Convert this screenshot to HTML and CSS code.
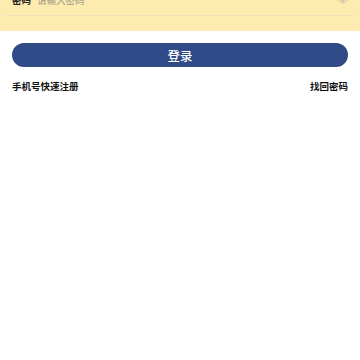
FILE: index.html
```html
<!DOCTYPE html>
<html lang="zh">
<head>
<meta charset="utf-8">
<link rel="stylesheet" href="styles.css">
</head>
<body>
<div class="panel">
  <div class="row">
    <span class="label">密码</span>
    <span class="placeholder">请输入密码</span>
    <svg class="eye" width="10" height="8" viewBox="0 0 10 8"><path d="M0.5 4 Q5 -1.5 9.5 4 Q5 9.5 0.5 4 Z" fill="none" stroke="#c9c2a8" stroke-width="1"/><circle cx="5" cy="4" r="1.6" fill="#c9c2a8"/></svg>
  </div>
</div>
<div class="actions">
  <button class="login">登录</button>
  <div class="links">
    <span class="link">手机号快速注册</span>
    <span class="link">找回密码</span>
  </div>
</div>
</body>
</html>
```
FILE: styles.css
```css
html, body {
  margin: 0;
  padding: 0;
  background: #ffffff;
  font-family: "Noto Sans CJK SC", "Noto Sans", sans-serif;
}
.panel {
  background: #feebb0;
  padding: 0 6px 15px 6px;
  margin-top: -16px;
}
.row {
  height: 31px;
  display: flex;
  align-items: center;
  padding: 0 6px;
  border-bottom: 1px solid #ece0bd;
}
.label {
  font-size: 9.5px;
  font-weight: bold;
  color: #222222;
  width: 25px;
}
.placeholder {
  font-size: 9.5px;
  color: #a09a88;
  flex: 1;
}
.actions {
  padding: 12px 12px 0 12px;
}
.login {
  display: block;
  width: 100%;
  height: 24px;
  border: none;
  border-radius: 12px;
  background: #2f4a86;
  color: #ffffff;
  font-family: "Noto Sans CJK SC", sans-serif;
  font-size: 12.5px;
  font-weight: 500;
  padding: 0;
}
.links {
  display: flex;
  justify-content: space-between;
  margin-top: 12px;
}
.link {
  font-size: 9.5px;
  font-weight: bold;
  color: #111111;
}
```
